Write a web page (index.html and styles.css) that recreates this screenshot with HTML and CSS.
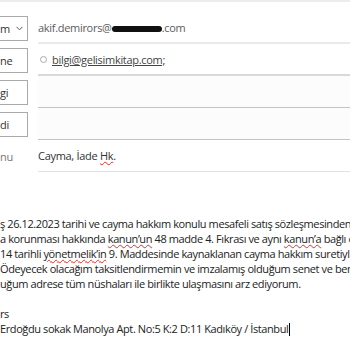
FILE: index.html
```html
<!DOCTYPE html>
<html lang="tr">
<head>
    <meta charset="UTF-8">
    <title>Yeni ileti</title>
    <link rel="stylesheet" href="styles.css">
</head>
<body>
    <div class="topbar"></div>
    <div class="header">
        <div class="row">
            <div class="btn">m<svg class="chev" width="7" height="5" viewBox="0 0 7 5"><polyline points="0.5,0.8 3.5,3.8 6.5,0.8" fill="none" stroke="#555" stroke-width="1"/></svg></div>
            <div class="field first"><span>akif.demirors@<span class="redact"></span>.com</span></div>
        </div>
        <div class="row">
            <div class="btn">ne</div>
            <div class="field second"><span class="circle"></span><span class="addr">bilgi@gelisimkitap.com;</span></div>
        </div>
        <div class="row">
            <div class="btn">gi</div>
            <div class="field empty"></div>
        </div>
        <div class="row">
            <div class="btn">di</div>
            <div class="field empty"></div>
        </div>
        <div class="row">
            <div class="label">nu</div>
            <div class="field subject"><span>Cayma, İade <span class="typo">Hk</span>.</span></div>
        </div>
    </div>

    <div class="message">
        <p>ş 26.12.2023 tarihi ve cayma hakkım konulu mesafeli satış sözleşmesinden</p>
        <p>a korunması hakkında <span class="typo">kanun’un</span> 48 madde 4. Fıkrası ve aynı <span class="typo">kanun’a</span> bağlı o</p>
        <p>14 tarihli <span class="typo">yönetmelik’in</span> 9. Maddesinde kaynaklanan cayma hakkım suretiyl</p>
        <p>Ödeyecek olacağım taksitlendirmemin ve imzalamış olduğum senet ve benz</p>
        <p>uğum adrese tüm nüshaları ile birlikte ulaşmasını arz ediyorum.</p>
        <p class="blank"></p>
        <p>rs</p>
        <p>Erdoğdu sokak Manolya Apt. No:5 K:2 D:11 Kadıköy / İstanbul<span class="caret"></span></p>
    </div>
</body>
</html>
```

FILE: styles.css
```css
* {
    margin: 0;
    padding: 0;
    box-sizing: border-box;
}

body {
    width: 350px;
    height: 350px;
    overflow: hidden;
    background-color: #fff;
    font-family: 'Open Sans', 'Noto Sans', sans-serif;
    font-size: 11px;
    color: #222;
}

.topbar {
    height: 2px;
    background-color: #ececec;
}

.header {
    margin-top: 10px;
}

.row {
    display: grid;
    grid-template-columns: 28px 1fr;
    column-gap: 10px;
    height: 32px;
    align-items: center;
}

.btn {
    height: 25px;
    border: 1px solid #a9a9a9;
    border-left: none;
    display: flex;
    align-items: center;
    color: #333;
    letter-spacing: -0.3px;
}

.chev {
    margin-left: 6px;
}

.label {
    color: #777;
    letter-spacing: -0.3px;
}

.field {
    height: 100%;
    display: flex;
    align-items: center;
    color: #5c5c5c;
    letter-spacing: -0.3px;
}

.first {
    border-bottom: 2px solid #eaeaea;
}

.second {
    border-bottom: 2px solid #d9d9d9;
}

.empty {
    border-bottom: 1px solid #c4c4c4;
    background-color: #fcfcfc;
}

.subject {
    border-bottom: 1px solid #e2e2e2;
    color: #333;
}

.redact {
    display: inline-block;
    width: 50px;
    height: 6px;
    margin-top: 1px;
    background-color: #111;
    border-radius: 3px;
}

.circle {
    width: 7px;
    height: 7px;
    border: 1px solid #aaa;
    border-radius: 50%;
    margin: 0 5px 0 2px;
}

.addr {
    color: #444;
    text-decoration: underline;
}

.typo {
    text-decoration: underline wavy #e0302a;
    text-decoration-thickness: 0.5px;
    text-underline-offset: 1px;
}

.message {
    margin-top: 44px;
    line-height: 15px;
    font-size: 11px;
    letter-spacing: -0.4px;
    white-space: nowrap;
}

.blank {
    height: 15px;
}

.caret {
    display: inline-block;
    width: 1px;
    height: 13px;
    margin-left: 1px;
    vertical-align: -3px;
    background-color: #000;
}
```
